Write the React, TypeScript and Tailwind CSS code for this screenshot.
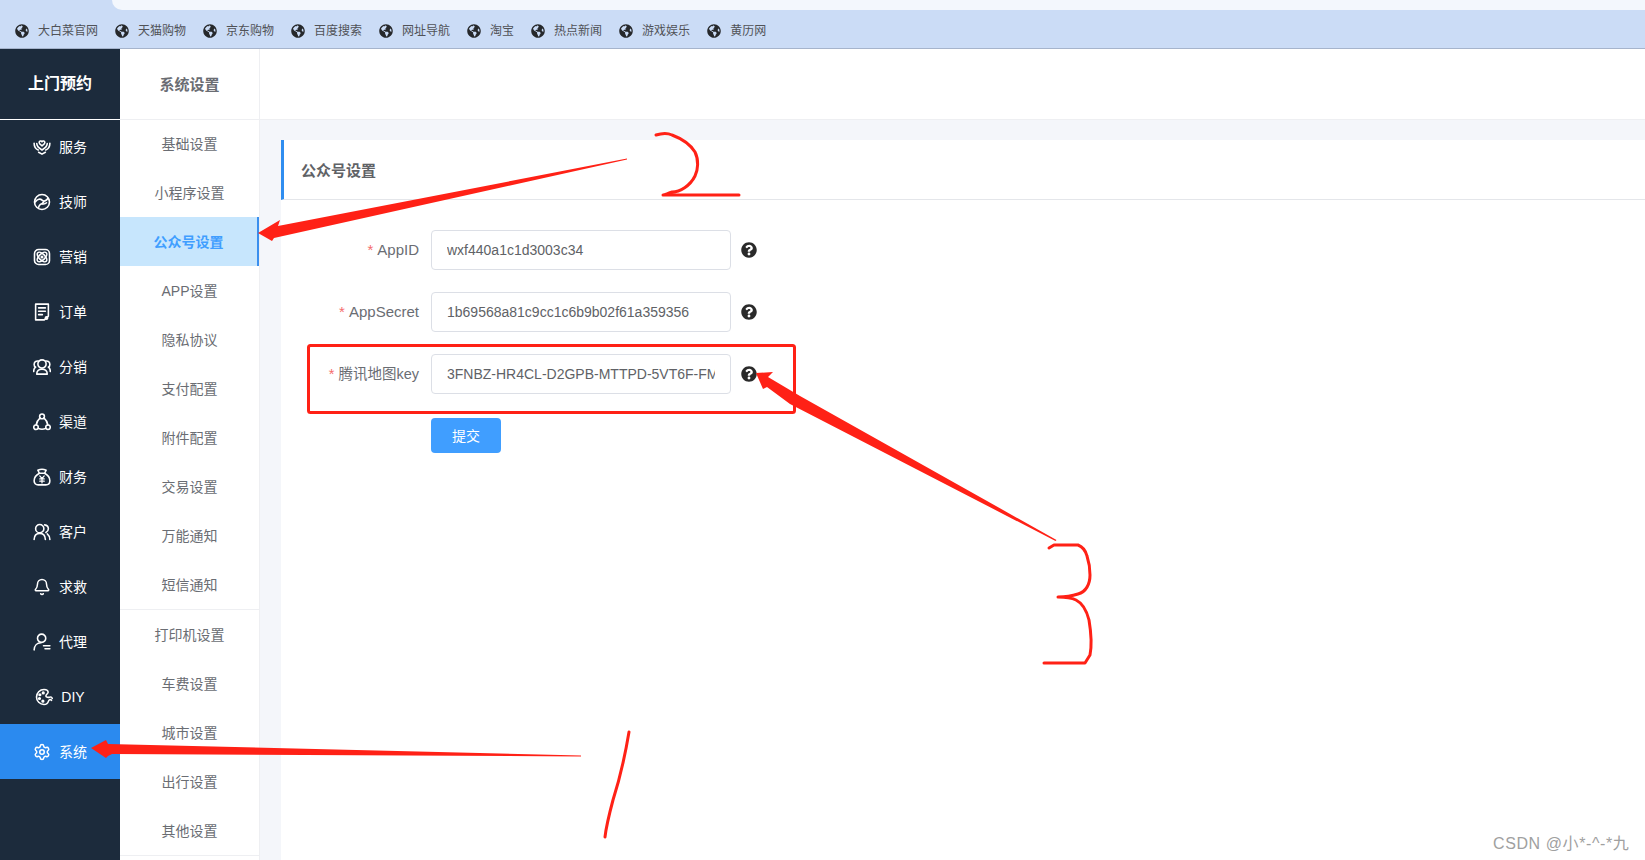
import React from "react";
import { FaGlobeAmericas, FaQuestionCircle } from "react-icons/fa";
import { Settings, Bell } from "lucide-react";

const S = ({ children }: { children: React.ReactNode }) => (
  <svg viewBox="0 0 24 24" width="18" height="18" fill="none" stroke="#fff" strokeWidth="2.100" strokeLinecap="round" strokeLinejoin="round" className="shrink-0">
    {children}
  </svg>
);

const icons: Record<string, React.ReactNode> = {
  service: (
    <S>
      <path d="M12 5c-1-1.800-3.800-1.200-3.800 1 0 1.800 2.200 3.200 3.800 4.500 1.600-1.300 3.800-2.700 3.800-4.500 0-2.200-2.800-2.800-3.800-1z" />
      <path d="M1.500 7c0 4.500 1.500 7.500 5.500 9M22.500 7c0 4.500-1.500 7.500-5.500 9" />
      <path d="M7.500 19l4.500 2.500 4.500-2.500M5 7.500c.2 3 2 5.500 7 8.500 5-3 6.800-5.500 7-8.500" />
    </S>
  ),
  tech: (
    <S>
      <circle cx="12" cy="12" r="10" />
      <path d="M3 12c3-4.500 7-4.500 9-2.500s5.500 1.500 8-2.500" />
      <path d="M7.500 19c.5-3 3-5 5.500-4.500 2 .4 3.500 0 5-1.500" />
      <path d="M12 14.500l2.500-3" />
    </S>
  ),
  market: (
    <S>
      <rect x="2" y="2" width="20" height="20" rx="5.500" />
      <ellipse cx="12" cy="12" rx="8" ry="4" transform="rotate(45 12 12)" />
      <ellipse cx="12" cy="12" rx="8" ry="4" transform="rotate(-45 12 12)" />
      <circle cx="12" cy="12" r="1" />
    </S>
  ),
  order: (
    <S>
      <path d="M15 22.500H3.500v-21h17v16l-5.500 5z" />
      <path d="M7.500 6.500h9M7.500 11h9M7.500 15.500h5" />
      <circle cx="18" cy="20" r="1.500" />
    </S>
  ),
  share: (
    <S>
      <circle cx="12" cy="8" r="5.500" />
      <path d="M7 4C4 3.500 1.500 5.500 1.500 8.500c0 1.700.8 3 2 3.800C1.800 13.500.8 15.500 1 18M17 4c3-.5 5.500 1.500 5.500 4.500 0 1.700-.8 3-2 3.800 1.700 1.200 2.700 3.200 2.500 5.700" />
      <path d="M5 21.500c0-4 3-6.500 7-6.500s7 2.500 7 6.500z" />
    </S>
  ),
  channel: (
    <S>
      <circle cx="12" cy="4.500" r="3.200" />
      <circle cx="4" cy="19" r="3" />
      <circle cx="20" cy="19" r="3" />
      <path d="M9.500 6.500C6.500 9 4.800 12.500 4.200 16M14.500 6.500c3 2.500 4.700 6 5.300 9.500M7 20.500c3.300 1.500 6.700 1.500 10 0" />
    </S>
  ),
  finance: (
    <S>
      <path d="M8.500 7L6.500 3c3.500-1.800 7.500-1.800 11 0l-2 4" />
      <path d="M8.500 7h7c4 2.200 7 6 7 10 0 3.200-2 5.500-5.500 5.500H7C3.500 22.500 1.500 20.200 1.500 17c0-4 3-7.800 7-10z" />
      <path d="M9 10.500l3 3.500 3-3.500M9 14.500h6M9 17.500h6M12 14v6" strokeWidth="1.600" />
    </S>
  ),
  customer: (
    <S>
      <circle cx="9" cy="7.500" r="5.500" />
      <path d="M15.500 2.500c2.800.5 5 2.500 5 5.200 0 2.300-1.300 4-3.300 5M1.500 22c.2-5 3-8.200 7.500-8.200s7.300 3.200 7.500 8.200M19 14.500c2 1.500 3.300 4 3.500 7.500" />
    </S>
  ),
  agent: (
    <S>
      <circle cx="11.500" cy="7" r="5.500" />
      <path d="M1.500 22.500c.3-5.500 4-9.500 9-9.500M14 17h8.500M16 21h6.500" />
    </S>
  ),
  diy: (
    <S>
      <path d="M22 16.500c-1.500-2-3.500-.5-4 1-.8 2.800-3.300 4.500-6 4.500a10 10 0 1 1 0-20c3.800 0 5.500 2 5.500 3.800 0 1.700-3 2.700-3 4.700s3.300 2.200 5 1.700 3-.2 3.500 1.800" />
      <circle cx="6.500" cy="9" r="1.100" />
      <circle cx="6" cy="14" r="1.100" />
      <circle cx="11" cy="6.500" r="1.100" />
      <circle cx="10.500" cy="17.500" r="1.100" />
    </S>
  ),
};

const nav: { k: string; t: string; active?: boolean }[] = [
  { k: "service", t: "服务" },
  { k: "tech", t: "技师" },
  { k: "market", t: "营销" },
  { k: "order", t: "订单" },
  { k: "share", t: "分销" },
  { k: "channel", t: "渠道" },
  { k: "finance", t: "财务" },
  { k: "customer", t: "客户" },
  { k: "bell", t: "求救" },
  { k: "agent", t: "代理" },
  { k: "diy", t: "DIY" },
  { k: "settings", t: "系统", active: true },
];

const group1 = ["基础设置", "小程序设置", "公众号设置", "APP设置", "隐私协议", "支付配置", "附件配置", "交易设置", "万能通知", "短信通知"];
const group2 = ["打印机设置", "车费设置", "城市设置", "出行设置", "其他设置"];
const bookmarks = ["大白菜官网", "天猫购物", "京东购物", "百度搜索", "网址导航", "淘宝", "热点新闻", "游戏娱乐", "黄历网"];

const fields = [
  { label: "AppID", value: "wxf440a1c1d3003c34", size: "text-[15px]" },
  { label: "AppSecret", value: "1b69568a81c9cc1c6b9b02f61a359356", size: "text-[15px]" },
  { label: "腾讯地图key", value: "3FNBZ-HR4CL-D2GPB-MTTPD-5VT6F-FMBQ7", size: "text-[14.5px] pt-px" },
];

function SubItem({ t }: { t: string }) {
  const active = t === "公众号设置";
  return (
    <div
      className={
        active
          ? "h-[49px] flex items-center justify-center text-sm font-bold text-[#409eff] bg-[#c7e6fd] border-r-2 border-[#3a8fee]"
          : "h-[49px] flex items-center justify-center text-sm text-[#6a6d73]"
      }
    >
      {t}
    </div>
  );
}

export default function App() {
  return (
    <div className="relative h-[860px] overflow-hidden bg-white [font-family:'Liberation_Sans','Noto_Sans_CJK_SC',sans-serif]">
      {/* browser chrome */}
      <div className="relative z-10 h-[48px] bg-[#cbdcf6] shadow-[0_1px_0_#a6b4cc]">
        <div className="absolute left-[112px] right-0 top-0 h-[10px] bg-[#f3f7fd] rounded-bl-[10px]" />
        <div className="absolute left-[15px] top-[23px] flex items-center gap-[17px]">
          {bookmarks.map((b) => (
            <div key={b} className="flex items-center gap-[9px] h-4 text-xs text-[#505257]">
              <FaGlobeAmericas size={14} color="#26282b" />
              <span>{b}</span>
            </div>
          ))}
        </div>
      </div>

      <div className="flex h-[812px]">
        {/* sidebar */}
        <div className="w-[120px] shrink-0 bg-[#1c2b3c] text-white">
          <div className="relative h-[71px] pt-px flex items-center justify-center shadow-[0_1px_0_#fff] text-base font-bold">上门预约</div>
          {nav.map((n) => (
            <div
              key={n.t}
              className={
                n.active
                  ? "h-[55px] flex items-center justify-center gap-2 text-sm bg-[#2b8aef]"
                  : "h-[55px] flex items-center justify-center gap-2 text-sm"
              }
            >
              {n.k === "bell" ? (
                <Bell size={18} strokeWidth={2} />
              ) : n.k === "settings" ? (
                <Settings size={18} strokeWidth={2} />
              ) : (
                icons[n.k]
              )}
              <span>{n.t}</span>
            </div>
          ))}
        </div>

        {/* sub menu */}
        <div className="w-[140px] shrink-0 border-r border-[#eeeff2] bg-white">
          <div className="relative h-[71px] pt-[3px] flex items-center justify-center shadow-[0_1px_0_#eeeff2] text-[15px] font-bold text-[#6a6d73]">系统设置</div>
          <div className="border-b border-[#eeeff2]">
            {group1.map((t) => (
              <SubItem key={t} t={t} />
            ))}
          </div>
          <div className="border-b border-[#eeeff2]">
            {group2.map((t) => (
              <SubItem key={t} t={t} />
            ))}
          </div>
        </div>

        {/* main */}
        <div className="flex-1 min-w-0 flex flex-col bg-[#f4f6fa]">
          <div className="h-[71px] shrink-0 bg-white shadow-[0_1px_0_#eeeff2]" />
          <div className="flex-1 ml-[21px] mt-[21px] bg-white">
            <div className="h-[60px] pt-[3px] flex items-center border-l-[3px] border-b border-b-[#e4e6ea] border-l-[#2f8df0] pl-[17px] text-[15px] font-bold text-[#606266]">
              公众号设置
            </div>
            <div className="pt-[30px]">
              {fields.map((f) => (
                <div key={f.label} className="flex items-center h-10 mb-[22px]">
                  <label className={`w-[150px] pr-3 text-right text-[#6a6d73] ${f.size}`}>
                    <span className="text-[#f56c6c] mr-1">*</span>
                    {f.label}
                  </label>
                  <input
                    readOnly
                    value={f.value}
                    className="w-[300px] h-10 px-[15px] border border-[#dcdfe6] rounded bg-white text-sm text-[#606266] outline-none"
                  />
                  <FaQuestionCircle size={16} color="#2a2a2a" className="ml-[10px]" />
                </div>
              ))}
              <div className="pl-[150px] mt-[24px]">
                <button className="w-[70px] h-[35px] rounded bg-[#409eff] text-sm text-white">提交</button>
              </div>
            </div>
          </div>
        </div>
      </div>

      {/* hand-drawn annotations over the screenshot */}
      <svg className="absolute inset-0 pointer-events-none" width="1645" height="860" viewBox="0 0 1645 860" fill="none">
        <rect x="308.500" y="345.500" width="486" height="67" rx="2" stroke="#ff2116" strokeWidth="3" />
        {/* arrow 1 */}
        <path d="M581 755.500 L581 756.500 L112 754 L108 756 L106 758 L91 748 L106 740 L108 744 Z" fill="#ff2116" />
        {/* arrow 2 */}
        <path d="M627 158.500 L627 159.500 L274 238 L272 241 L258 233 L280 220 L278 226 Z" fill="#ff2116" />
        {/* arrow 3 */}
        <path d="M1056.500 540 L1055.500 541 L790 404 L767 387 L763 389 L756 373 L773 372 L768 377 L800 396 Z" fill="#ff2116" />
        {/* digit 1 */}
        <path d="M629 732 C626 750 621 775 613 800 C609 815 606 828 605 837" stroke="#ff2116" strokeWidth="3" strokeLinecap="round" />
        {/* digit 2 */}
        <path d="M656 135 C662 133 668 133 672 135 C680 138 690 144 695 152 C699 160 698 170 695 176 C690 186 680 192 672 192 C668 193 665 195 663 195 L739 195" stroke="#ff2116" strokeWidth="3" strokeLinecap="round" strokeLinejoin="round" />
        {/* digit 3 */}
        <path d="M1049 548 L1054 545 H1078 C1083 547 1086 552 1087 556 C1089 562 1090 568 1090 575 C1090 584 1086 592 1078 594 C1072 596 1066 597 1058 597 C1066 597 1072 598 1076 600 C1084 604 1087 612 1089 620 C1091 632 1092 645 1090 655 L1085 663 H1044" stroke="#ff2116" strokeWidth="3" strokeLinecap="round" strokeLinejoin="round" />
      </svg>

      {/* watermark */}
      <div className="absolute left-[1493px] top-[834px] text-base leading-5 tracking-[0.6px] text-[#a0a0a0] whitespace-nowrap">CSDN @小*-^-*九</div>
    </div>
  );
}
